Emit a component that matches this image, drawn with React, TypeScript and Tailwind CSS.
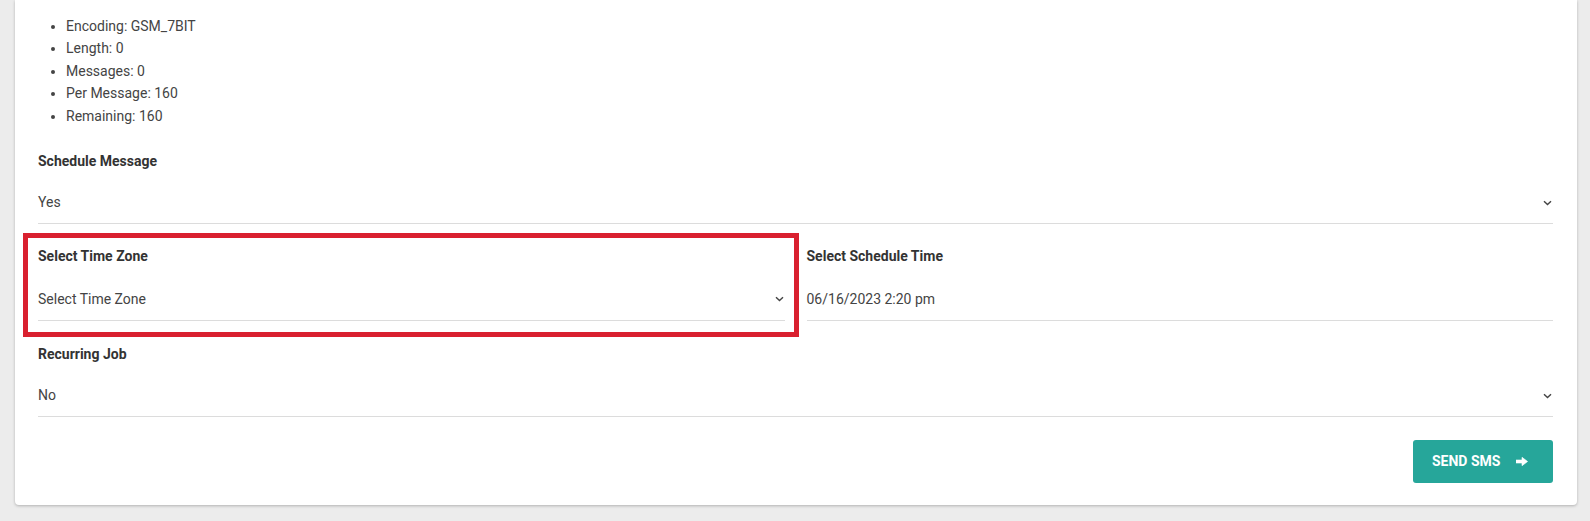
import React from "react";

const stats = [
  "Encoding: GSM_7BIT",
  "Length: 0",
  "Messages: 0",
  "Per Message: 160",
  "Remaining: 160",
];

const Chevron = () => (
  <svg width="9" height="6" viewBox="0 0 9 6" className="shrink-0 mr-[1px]">
    <path d="M1 1.2 L4.5 4.6 L8 1.2" fill="none" stroke="#444" strokeWidth="1.4" />
  </svg>
);

const ArrowIcon = () => (
  <svg width="12" height="9" viewBox="0 0 12 9" className="ml-[16px]">
    <path d="M0 3 H6 V0.3 L11.6 4.5 L6 8.7 V6 H0 Z" fill="#fff" strokeLinejoin="round" stroke="#fff" strokeWidth="0.6" />
  </svg>
);

interface FieldProps {
  label: string;
  value: string;
  select?: boolean;
  tall?: boolean;
}

const Field: React.FC<FieldProps> = ({ label, value, select = true, tall = false }) => (
  <div className="flex flex-col">
    <div className="h-[20px] leading-[20px] text-[14px] font-bold text-[#333]">{label}</div>
    <div
      className={
        tall
          ? "mt-[12px] h-[43px] flex items-center justify-between border-b border-[#dcdcdc] text-[14px] text-[#444]"
          : "mt-[11px] h-[42px] flex items-center justify-between border-b border-[#dcdcdc] text-[14px] text-[#444]"
      }
    >
      <span>{value}</span>
      {select ? <Chevron /> : null}
    </div>
  </div>
);

export default function App() {
  return (
    <div
      className="min-h-screen bg-[#ececec] pl-[15px] pr-[13px] pb-[16px]"
      style={{ fontFamily: "Roboto, 'Liberation Sans', sans-serif" }}
    >
      <div className="bg-white rounded-b-[4px] shadow-[0_1px_3px_rgba(0,0,0,0.25)] pl-[23px] pr-[24px] pt-[15px] pb-[22px]">
        <ul className="list-disc pl-[28px] text-[14px] leading-[22.4px] text-[#444]">
          {stats.map((s) => (
            <li key={s}>{s}</li>
          ))}
        </ul>

        <div className="mt-[24px]">
          <Field label="Schedule Message" value="Yes" />
        </div>

        <div className="mt-[22px] grid grid-cols-2 gap-x-[22px]">
          <div className="relative">
            <Field label="Select Time Zone" value="Select Time Zone" tall />
            <div className="absolute left-[-15px] right-[-14px] top-[-13px] bottom-[-16px] border-[5px] border-[#d9202f] pointer-events-none" />
          </div>
          <Field label="Select Schedule Time" value="06/16/2023 2:20 pm" select={false} tall />
        </div>

        <div className="mt-[23px]">
          <Field label="Recurring Job" value="No" />
        </div>

        <div className="mt-[23px] flex justify-end">
          <button
            type="button"
            className="w-[140px] h-[43px] flex items-center pl-[19px] rounded-[3px] bg-[#26a69a] text-white text-[14px] font-bold uppercase"
          >
            Send SMS
            <ArrowIcon />
          </button>
        </div>
      </div>
    </div>
  );
}
